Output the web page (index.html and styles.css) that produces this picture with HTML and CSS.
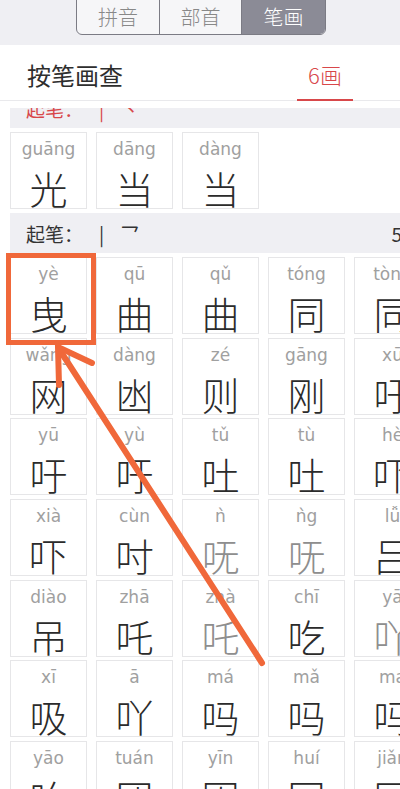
FILE: index.html
```html
<!DOCTYPE html>
<html lang="zh">
<head>
<meta charset="utf-8">
<title>按笔画查</title>
<link rel="stylesheet" href="styles.css">
</head>
<body>
<div class="page">
  <div class="topbar">
    <div class="seg">
      <span class="seg-item">拼音</span>
      <span class="seg-item">部首</span>
      <span class="seg-item on">笔画</span>
    </div>
  </div>
  <div class="header">
    <span class="title">按笔画查</span>
    <span class="tab">6画</span>
  </div>
  <div class="gap"></div>
  <div class="list-wrap">
    <div class="list">
      <div class="band band-red"><span class="band-label">起笔：<span class="stroke">|</span><span class="stroke2">丶</span></span></div>
      <div class="grid">
        <div class="cell"><span class="py">guāng</span><span class="hz">光</span></div>
        <div class="cell"><span class="py">dāng</span><span class="hz">当</span></div>
        <div class="cell"><span class="py">dàng</span><span class="hz">当</span></div>
      </div>
      <div class="band"><span class="band-label">起笔：<span class="stroke">|</span><span class="stroke2">乛</span></span><span class="band-count">5画</span></div>
      <div class="grid">
        <div class="cell"><span class="py">yè</span><span class="hz">曳</span></div>
        <div class="cell"><span class="py">qū</span><span class="hz">曲</span></div>
        <div class="cell"><span class="py">qǔ</span><span class="hz">曲</span></div>
        <div class="cell"><span class="py">tóng</span><span class="hz">同</span></div>
        <div class="cell"><span class="py">tòng</span><span class="hz">同</span></div>

        <div class="cell"><span class="py">wǎng</span><span class="hz">网</span></div>
        <div class="cell"><span class="py">dàng</span><span class="hz">凼</span></div>
        <div class="cell"><span class="py">zé</span><span class="hz">则</span></div>
        <div class="cell"><span class="py">gāng</span><span class="hz">刚</span></div>
        <div class="cell"><span class="py">xū</span><span class="hz">吁</span></div>

        <div class="cell"><span class="py">yū</span><span class="hz">吁</span></div>
        <div class="cell"><span class="py">yù</span><span class="hz">吁</span></div>
        <div class="cell"><span class="py">tǔ</span><span class="hz">吐</span></div>
        <div class="cell"><span class="py">tù</span><span class="hz">吐</span></div>
        <div class="cell"><span class="py">hè</span><span class="hz">吓</span></div>

        <div class="cell"><span class="py">xià</span><span class="hz">吓</span></div>
        <div class="cell"><span class="py">cùn</span><span class="hz">吋</span></div>
        <div class="cell"><span class="py">ǹ</span><span class="hz dim">呒</span></div>
        <div class="cell"><span class="py">ǹg</span><span class="hz dim">呒</span></div>
        <div class="cell"><span class="py">lǚ</span><span class="hz">吕</span></div>

        <div class="cell"><span class="py">diào</span><span class="hz">吊</span></div>
        <div class="cell"><span class="py">zhā</span><span class="hz">吒</span></div>
        <div class="cell"><span class="py">zhà</span><span class="hz dim">吒</span></div>
        <div class="cell"><span class="py">chī</span><span class="hz">吃</span></div>
        <div class="cell"><span class="py">yā</span><span class="hz dim">吖</span></div>

        <div class="cell"><span class="py">xī</span><span class="hz">吸</span></div>
        <div class="cell"><span class="py">ā</span><span class="hz">吖</span></div>
        <div class="cell"><span class="py">má</span><span class="hz">吗</span></div>
        <div class="cell"><span class="py">mǎ</span><span class="hz">吗</span></div>
        <div class="cell"><span class="py">ma</span><span class="hz">吗</span></div>

        <div class="cell"><span class="py">yāo</span><span class="hz">吆</span></div>
        <div class="cell"><span class="py">tuán</span><span class="hz">团</span></div>
        <div class="cell"><span class="py">yīn</span><span class="hz">因</span></div>
        <div class="cell"><span class="py">huí</span><span class="hz">回</span></div>
        <div class="cell"><span class="py">jiǎn</span><span class="hz">囝</span></div>
      </div>
    </div>
  </div>
  <svg class="annot" width="400" height="789" viewBox="0 0 400 789">
    <rect x="8.5" y="255.5" width="85" height="87" fill="none" stroke="#f0683a" stroke-width="5"/>
    <line x1="61" y1="352" x2="262" y2="663" stroke="#f0683a" stroke-width="6" stroke-linecap="round"/>
    <polyline points="92,363 58,347 59,385" fill="none" stroke="#f0683a" stroke-width="6" stroke-linecap="round" stroke-linejoin="miter"/>
  </svg>
</div>
</body>
</html>
```

FILE: styles.css
```css
html, body {
  margin: 0;
  padding: 0;
  background: #ffffff;
}

.page {
  position: relative;
  width: 400px;
  height: 789px;
  overflow: hidden;
  font-family: "Noto Sans CJK SC", "Noto Sans", sans-serif;
  color: #333333;
}

.topbar {
  height: 45px;
  background: #efeff3;
  display: flex;
  justify-content: flex-start;
  align-items: flex-start;
  padding-left: 76px;
  box-sizing: border-box;
  overflow: hidden;
}

.seg {
  display: flex;
  margin-top: -8px;
  height: 41px;
  border: 1px solid #7b7b84;
  border-radius: 6px;
  overflow: hidden;
  background: #f6f6f8;
}

.seg-item {
  display: flex;
  align-items: center;
  justify-content: center;
  padding-top: 5px;
  box-sizing: border-box;
  width: 82px;
  font-size: 20px;
  font-weight: 300;
  color: #888888;
  border-left: 1px solid #7b7b84;
}

.seg-item:first-child {
  border-left: none;
}

.seg-item.on {
  background: #8b8b96;
  color: #ffffff;
  width: 84px;
}

.header {
  height: 55px;
  display: flex;
  align-items: stretch;
  border-bottom: 1px solid #e9e9ec;
  padding-left: 27px;
}

.title {
  align-self: center;
  margin-top: 4px;
  font-size: 24px;
  color: #2e2e2e;
}

.tab {
  margin-left: auto;
  margin-right: 47px;
  width: 56px;
  display: flex;
  align-items: center;
  justify-content: center;
  padding-top: 4px;
  box-sizing: border-box;
  font-size: 22px;
  font-weight: 300;
  color: #d8474a;
  border-bottom: 2px solid #d8474a;
  margin-bottom: -1px;
}

.gap {
  height: 7px;
}

.list-wrap {
  height: 681px;
  overflow: hidden;
}

.list {
  margin-top: -20px;
  padding-left: 10px;
  width: 421px;
  display: flex;
  flex-direction: column;
}

.band {
  height: 40px;
  margin: 4px 0;
  background: #efeff3;
  display: flex;
  align-items: center;
  justify-content: space-between;
  padding: 0 10px 0 16px;
  font-size: 19px;
  color: #333333;
}

.band:first-child {
  margin-top: 0;
}

.band-red {
  color: #d8474a;
}

.stroke {
  margin-left: 16px;
}

.stroke2 {
  margin-left: 16px;
}

.grid {
  display: grid;
  grid-template-columns: repeat(5, 77px);
  column-gap: 9px;
  row-gap: 3.7px;
}

.cell {
  height: 77px;
  box-sizing: border-box;
  border: 1px solid #e6e6e8;
  background: #ffffff;
  display: flex;
  flex-direction: column;
  align-items: center;
}

.py {
  margin-top: 6px;
  font-family: "DejaVu Sans", sans-serif;
  font-size: 17px;
  line-height: 20px;
  color: #a0a0a0;
}

.hz {
  margin-top: 9px;
  font-size: 38px;
  line-height: 40px;
  font-weight: 300;
  color: #2b2b2b;
}

.hz.dim {
  color: #8e8e8e;
}

.annot {
  position: absolute;
  left: 0;
  top: 0;
  pointer-events: none;
}
```
